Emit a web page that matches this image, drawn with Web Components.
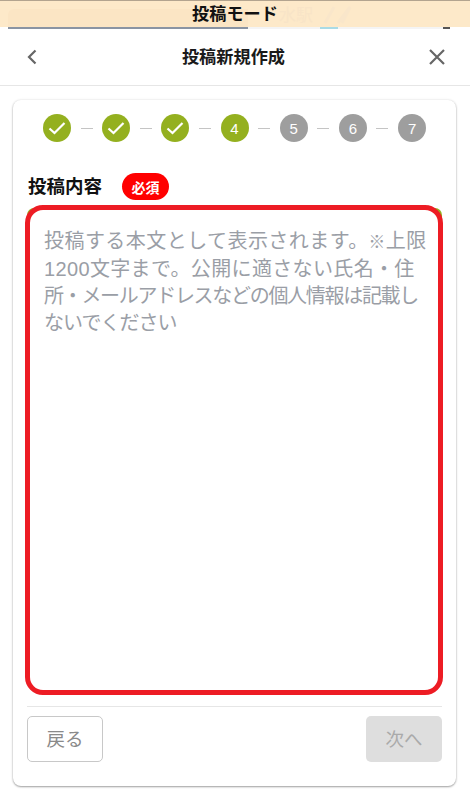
<!DOCTYPE html>
<html lang="ja">
<head>
<meta charset="utf-8">
<title>投稿新規作成</title>
<style>
  html, body { margin: 0; height: 100%; background: #fff; }
  body { font-family: "Liberation Sans", "Noto Sans CJK JP", sans-serif; overflow: hidden; }
</style>
</head>
<body>
<post-mode-bar>投稿モード</post-mode-bar>
<post-header>投稿新規作成</post-header>
<post-card>
  <step-row slot="steps" current="4" total="7"></step-row>
  <field-label slot="label">投稿内容</field-label>
  <post-textarea slot="field">
    <span style="letter-spacing:.45px">投稿する本文として表示されます。<small>※</small>上限</span>
    <span style="letter-spacing:.35px">1200文字まで。公開に適さない氏名・住</span>
    <span style="letter-spacing:-1.3px">所・メールアドレスなどの個人情報は記載し</span>
    <span style="letter-spacing:-1px">ないでください</span>
  </post-textarea>
  <post-button slot="back" kind="outline">戻る</post-button>
  <post-button slot="next" kind="disabled">次へ</post-button>
</post-card>

<script>
class PostModeBar extends HTMLElement {
  connectedCallback() {
    this.attachShadow({ mode: 'open' });
    this.shadowRoot.innerHTML = `
      <style>
        :host {
          display: block;
          position: relative;
          height: 29px;
          overflow: hidden;
          background: #fff;
        }
        .bar {
          display: flex;
          align-items: center;
          justify-content: center;
          position: relative;
          height: 27px;
          padding-bottom: 3px;
          background: #fde9c9;
          border-top: 1px solid #b3a48f;
          box-sizing: border-box;
          overflow: hidden;
          color: #111;
          font-size: 17.2px;
          font-weight: 700;
        }
        /* map page showing faintly through the banner */
        .ghost { position: absolute; left: 279px; top: 0; font-size: 17px; font-weight: 400; color: #f8e4c7; }
        .panel { position: absolute; left: 8px; top: 8px; width: 240px; height: 30px; border-radius: 6px 0 0 0; background: #fbe5c4; }
        .marks { position: absolute; left: 322px; top: 3px; }
        .strip {
          height: 2px;
          background: linear-gradient(to right,
            #fff 0 8px, #8a94a3 8px 248px, #f4f4f4 248px 320px,
            #a9dbe6 320px 338px, #f4f4f4 338px 443px, #555 443px 450px, #fff 450px);
        }
        span { position: relative; }
      </style>
      <div class="bar">
        <div class="panel"></div>
        <div class="ghost">水駅</div>
        <svg class="marks" width="40" height="20" viewBox="0 0 40 20"><path d="M3 19 L12 3 M16 19 L28 3 L20 19" fill="none" stroke="#f9e6ca" stroke-width="3"/></svg>
        <span><slot></slot></span>
      </div>
      <div class="strip"></div>
    `;
  }
}
customElements.define('post-mode-bar', PostModeBar);

class PostHeader extends HTMLElement {
  connectedCallback() {
    this.attachShadow({ mode: 'open' });
    this.shadowRoot.innerHTML = `
      <style>
        :host {
          display: flex;
          align-items: center;
          justify-content: space-between;
          height: 57px;
          padding: 0 27px;
          background: #fff;
          border-bottom: 1px solid #e6e6e6;
          box-sizing: border-box;
          color: #1a1a1a;
          font-size: 17.2px;
          font-weight: 700;
        }
        svg { display: block; fill: none; stroke: #666; stroke-width: 2.2; }
        span { margin-bottom: 3px; }
        .close { margin-right: -3px; }
      </style>
      <svg width="12" height="16" viewBox="0 0 12 16"><path d="M8.5 1.5 L2 8 L8.5 14.5"/></svg>
      <span><slot></slot></span>
      <svg class="close" width="18" height="18" viewBox="0 0 18 18"><path d="M2 2 L16 16 M16 2 L2 16"/></svg>
    `;
  }
}
customElements.define('post-header', PostHeader);

class StepRow extends HTMLElement {
  connectedCallback() {
    const current = Number(this.getAttribute('current'));
    const total = Number(this.getAttribute('total'));
    let html = '';
    for (let i = 1; i <= total; i++) {
      if (i < current) {
        html += `<div class="dot on"><svg width="18" height="14" viewBox="0 0 18 14"><path d="M1.5 7.5 L6.5 12 L16.5 2" fill="none" stroke="#fff" stroke-width="2.2"/></svg></div>`;
      } else {
        html += `<div class="dot ${i === current ? 'on' : ''}">${i}</div>`;
      }
      if (i < total) html += '<div class="dash"></div>';
    }
    this.attachShadow({ mode: 'open' });
    this.shadowRoot.innerHTML = `
      <style>
        :host { display: flex; align-items: center; justify-content: center; margin-left: 1px; }
        .dot {
          width: 28px;
          height: 28px;
          border-radius: 50%;
          background: #9e9e9e;
          color: #fff;
          font-size: 15px;
          display: flex;
          align-items: center;
          justify-content: center;
        }
        .dot.on { background: #94b01f; }
        .dash { width: 12px; height: 1px; margin: 0 9.6px; background: #c4c4c4; }
      </style>
      ${html}
    `;
  }
}
customElements.define('step-row', StepRow);

class FieldLabel extends HTMLElement {
  connectedCallback() {
    this.attachShadow({ mode: 'open' });
    this.shadowRoot.innerHTML = `
      <style>
        :host { display: flex; align-items: center; gap: 20px; color: #111; font-size: 18.5px; font-weight: 700; }
        .name { margin-bottom: 3px; }
        .req {
          width: 47px;
          height: 27px;
          border-radius: 14px;
          background: #f00;
          color: #fff;
          font-size: 14px;
          display: flex;
          align-items: center;
          justify-content: center;
        }
      </style>
      <span class="name"><slot></slot></span>
      <span class="req">必須</span>
    `;
  }
}
customElements.define('field-label', FieldLabel);

class PostTextarea extends HTMLElement {
  connectedCallback() {
    this.attachShadow({ mode: 'open' });
    this.shadowRoot.innerHTML = `
      <style>
        :host { display: block; position: relative; height: 490px; }
        /* green corners of the real field peek out behind the red outline */
        .under { position: absolute; top: 3px; left: 2px; right: 1px; height: 30px; border-radius: 7px 7px 0 0; background: #94b01f; }
        .box {
          position: relative;
          display: flex;
          flex-direction: column;
          height: 100%;
          box-sizing: border-box;
          padding: 18px 0 0 14px;
          border: 5px solid #ed1c24;
          border-radius: 18px;
          background: #fff;
          overflow: hidden;
          white-space: nowrap;
          color: #9a9ea6;
          font-size: 20px;
          line-height: 27px;
        }
        ::slotted(span) { display: block; }
      </style>
      <div class="under"></div>
      <div class="box"><slot></slot></div>
    `;
  }
}
customElements.define('post-textarea', PostTextarea);

class PostButton extends HTMLElement {
  connectedCallback() {
    this.attachShadow({ mode: 'open' });
    this.shadowRoot.innerHTML = `
      <style>
        :host {
          display: flex;
          align-items: center;
          justify-content: center;
          width: 76px;
          height: 46.5px;
          box-sizing: border-box;
          border-radius: 5px;
          font-size: 18.5px;
        }
        :host([kind="outline"]) { border: 1px solid #c8c8c8; color: #8a8a8a; background: #fff; }
        :host([kind="disabled"]) { background: #dedede; color: #aaa; }
        span { margin-bottom: 2px; }
      </style>
      <span><slot></slot></span>
    `;
  }
}
customElements.define('post-button', PostButton);

class PostCard extends HTMLElement {
  connectedCallback() {
    this.attachShadow({ mode: 'open' });
    this.shadowRoot.innerHTML = `
      <style>
        :host {
          display: flex;
          flex-direction: column;
          height: 686px;
          margin: 14px 14px 0 13px;
          padding: 14px 13px 0 12px;
          box-sizing: border-box;
          background: #fff;
          border-radius: 8px;
          box-shadow: 0 1px 2px rgba(0,0,0,.35), 0 0 3px rgba(0,0,0,.1);
        }
        .label { margin-top: 30px; height: 27px; margin-left: 3px; }
        .field { margin-top: 6px; }
        .foot {
          display: flex;
          justify-content: space-between;
          margin: 10.5px 1px 0 2px;
          padding-top: 9px;
          border-top: 1px solid #e6e6e6;
        }
      </style>
      <slot name="steps"></slot>
      <div class="label"><slot name="label"></slot></div>
      <div class="field"><slot name="field"></slot></div>
      <div class="foot"><slot name="back"></slot><slot name="next"></slot></div>
    `;
  }
}
customElements.define('post-card', PostCard);
</script>
</body>
</html>
